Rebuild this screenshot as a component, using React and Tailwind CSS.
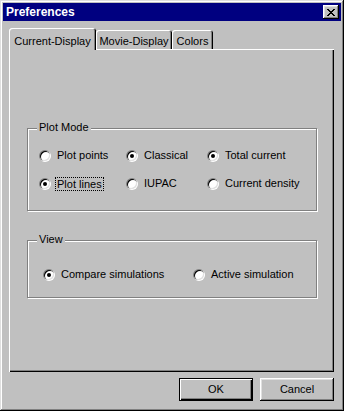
import React from 'react';

const font = { fontFamily: '"Liberation Sans", Arial, sans-serif' };

const Radio = ({ checked }) => (
  <div className="w-[12px] h-[12px] rounded-full shrink-0 shadow-[inset_1px_1px_#808080,inset_-1px_-1px_#fff] p-px">
    <div className="w-full h-full rounded-full bg-white shadow-[inset_1px_1px_#000,inset_-1px_-1px_#dfdfdf] flex items-center justify-center">
      {checked && <div className="w-[4px] h-[4px] rounded-full bg-black" />}
    </div>
  </div>
);

const Option = ({ label, checked, focus, width }) => (
  <div className={`flex items-center gap-[6px] h-[13px] ${width}`}>
    <Radio checked={checked} />
    {focus ? (
      <span className="border border-dotted border-black px-px -ml-[2px] leading-[12px]">{label}</span>
    ) : (
      <span className="leading-[13px]">{label}</span>
    )}
  </div>
);

const GroupBox = ({ title, className, children }) => (
  <div className={`relative border border-[#808080] shadow-[1px_1px_#fff,inset_1px_1px_#fff] ${className}`}>
    <span className="absolute -top-[8px] left-[9px] px-[2px] bg-[#c0c0c0] leading-[13px]">{title}</span>
    {children}
  </div>
);

const CloseGlyph = () => {
  const rows = ['XX....XX', '.XX..XX.', '..XXXX..', '...XX...', '..XXXX..', '.XX..XX.', 'XX....XX'];
  return (
    <svg width="8" height="7" viewBox="0 0 8 7" shapeRendering="crispEdges">
      {rows.flatMap((r, y) =>
        r.split('').map((c, x) => (c === 'X' ? <rect key={`${x}-${y}`} x={x} y={y} width="1" height="1" fill="#000" /> : null))
      )}
    </svg>
  );
};

export default function App() {
  return (
    <div style={font} className="w-[344px] h-[411px] bg-[#c0c0c0] p-[3px] flex flex-col text-[11px] text-black shadow-[inset_-1px_-1px_#000,inset_1px_1px_#dfdfdf,inset_-2px_-2px_#808080,inset_2px_2px_#fff]">
      {/* Title bar */}
      <div className="h-[18px] bg-[#000080] flex items-center justify-between pl-[3px] pr-[2px]">
        <span className="text-white font-bold text-[12px] leading-[18px]">Preferences</span>
        <button className="w-[16px] h-[14px] bg-[#c0c0c0] flex items-center justify-center shadow-[inset_-1px_-1px_#000,inset_1px_1px_#fff,inset_-2px_-2px_#808080,inset_2px_2px_#dfdfdf]">
          <CloseGlyph />
        </button>
      </div>

      {/* Tabs */}
      <div className="mt-[7px] ml-[6px] flex items-end h-[21px]">
        <div className="relative z-10 -mb-px h-[22px] w-[87px] bg-[#c0c0c0] rounded-t-[3px] shadow-[inset_1px_1px_#fff,inset_-1px_0_#000,inset_-2px_0_#808080] flex justify-center pt-[5px]">
          Current-Display
        </div>
        <div className="h-[19px] w-[76px] rounded-t-[3px] shadow-[inset_1px_1px_#fff,inset_-1px_0_#000,inset_-2px_0_#808080] flex justify-center pt-[3px]">
          Movie-Display
        </div>
        <div className="h-[19px] w-[41px] rounded-t-[3px] shadow-[inset_1px_1px_#fff,inset_-1px_0_#000,inset_-2px_0_#808080] flex justify-center pt-[3px]">
          Colors
        </div>
      </div>

      {/* Panel */}
      <div className="ml-[6px] w-[325px] h-[323px] shadow-[inset_1px_1px_#fff,inset_-1px_-1px_#000,inset_-2px_-2px_#808080] pt-[79px] pl-[18px]">
        <GroupBox title="Plot Mode" className="w-[290px] h-[83px] pt-[20px] pl-[11px]">
          <div className="flex flex-col gap-[15px]">
            <div className="flex">
              <Option label="Plot points" width="w-[87px]" />
              <Option label="Classical" checked width="w-[81px]" />
              <Option label="Total current" checked />
            </div>
            <div className="flex">
              <Option label="Plot lines" checked focus width="w-[87px]" />
              <Option label="IUPAC" width="w-[81px]" />
              <Option label="Current density" />
            </div>
          </div>
        </GroupBox>

        <GroupBox title="View" className="mt-[29px] w-[290px] h-[58px] pt-[27px] pl-[15px]">
          <div className="flex">
            <Option label="Compare simulations" checked width="w-[150px]" />
            <Option label="Active simulation" />
          </div>
        </GroupBox>
      </div>

      {/* Buttons */}
      <div className="mt-[6px] mr-[7px] flex justify-end gap-[7px]">
        <button className="w-[74px] h-[23px] border border-black shadow-[inset_1px_1px_#fff,inset_-1px_-1px_#000,inset_-2px_-2px_#808080] flex items-center justify-center">
          OK
        </button>
        <button className="w-[74px] h-[23px] shadow-[inset_-1px_-1px_#000,inset_1px_1px_#fff,inset_-2px_-2px_#808080,inset_2px_2px_#dfdfdf] flex items-center justify-center">
          Cancel
        </button>
      </div>
    </div>
  );
}
